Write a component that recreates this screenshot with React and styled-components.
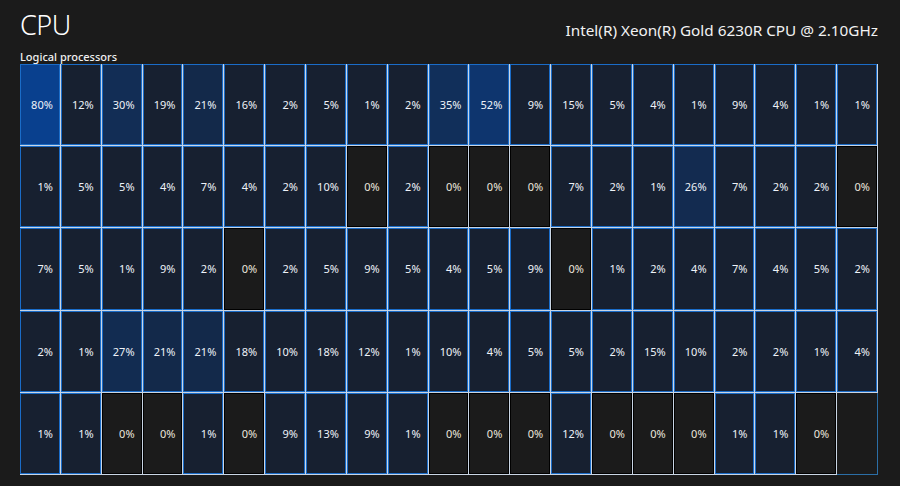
import React from 'react';
import styled, { createGlobalStyle } from 'styled-components';

const loads = [
  [80, 12, 30, 19, 21, 16, 2, 5, 1, 2, 35, 52, 9, 15, 5, 4, 1, 9, 4, 1, 1],
  [1, 5, 5, 4, 7, 4, 2, 10, 0, 2, 0, 0, 0, 7, 2, 1, 26, 7, 2, 2, 0],
  [7, 5, 1, 9, 2, 0, 2, 5, 9, 5, 4, 5, 9, 0, 1, 2, 4, 7, 4, 5, 2],
  [2, 1, 27, 21, 21, 18, 10, 18, 12, 1, 10, 4, 5, 5, 2, 15, 10, 2, 2, 1, 4],
  [1, 1, 0, 0, 1, 0, 9, 13, 9, 1, 0, 0, 0, 12, 0, 0, 0, 1, 1, 0, null],
];

// busy cores get a blue fill, the rest keep the plain navy tile
const fillFor = (p) => {
  if (p < 20) return '#172030';
  const t = p / 100;
  const mix = (a, b) => Math.round(a * (1 - t) + b * t);
  return `rgb(${mix(23, 6)}, ${mix(33, 72)}, ${mix(50, 165)})`;
};

const GlobalStyle = createGlobalStyle`
  html, body {
    margin: 0;
    padding: 0;
    background: #1b1b1b;
  }
`;

const Page = styled.div`
  width: 900px;
  height: 486px;
  box-sizing: border-box;
  padding: 8px 22px 11px 20px;
  display: flex;
  flex-direction: column;
  background: #1b1b1b;
  color: #ffffff;
  font-family: "Segoe UI", "Noto Sans", "Open Sans", sans-serif;
`;

const Header = styled.div`
  display: flex;
  justify-content: space-between;
  align-items: flex-end;
  height: 33px;
`;

const Title = styled.h1`
  margin: 0;
  font-size: 27px;
  font-weight: 300;
  line-height: 33px;
  letter-spacing: -0.5px;
`;

const Model = styled.div`
  font-size: 15.3px;
  line-height: 20px;
  margin-bottom: 1px;
  color: #f2f2f2;
`;

const Caption = styled.div`
  margin-top: 8px;
  font-size: 11px;
  font-weight: 500;
  line-height: 15px;
  color: #f0f0f0;
`;

const Grid = styled.div`
  flex: 1;
  display: grid;
  grid-template-columns: repeat(21, 1fr);
  grid-template-rows: repeat(5, 1fr);
  gap: 1px;
  padding: 0 1px 1px 0;
  background: #c9d5e4;
`;

const Cell = styled.div`
  display: flex;
  align-items: center;
  justify-content: flex-end;
  padding-right: 6px;
  border: 1px solid ${(p) => (p.$idle ? '#000000' : '#1a6cc8')};
  background: ${(p) => p.$fill};
  font-size: 11px;
  color: ${(p) => (p.$idle ? '#ebe6de' : '#eef2f8')};
  font-family: "Segoe UI", "Noto Sans", sans-serif;
  min-width: 0;
`;

const EmptyCell = styled.div`
  margin: 0 -1px -1px 0;
  background: #1b1b1b;
  border-right: 1px solid #2b6ea6;
  border-bottom: 1px solid #2b6ea6;
`;

export default function App() {
  return (
    <>
      <GlobalStyle />
      <Page>
        <Header>
          <Title>CPU</Title>
          <Model>Intel(R) Xeon(R) Gold 6230R CPU @ 2.10GHz</Model>
        </Header>
        <Caption>Logical processors</Caption>
        <Grid>
          {loads.flat().map((p, i) =>
            p === null ? (
              <EmptyCell key={i} />
            ) : (
              <Cell key={i} $idle={p === 0} $fill={p === 0 ? '#1b1b1b' : fillFor(p)}>
                {p}%
              </Cell>
            )
          )}
        </Grid>
      </Page>
    </>
  );
}
